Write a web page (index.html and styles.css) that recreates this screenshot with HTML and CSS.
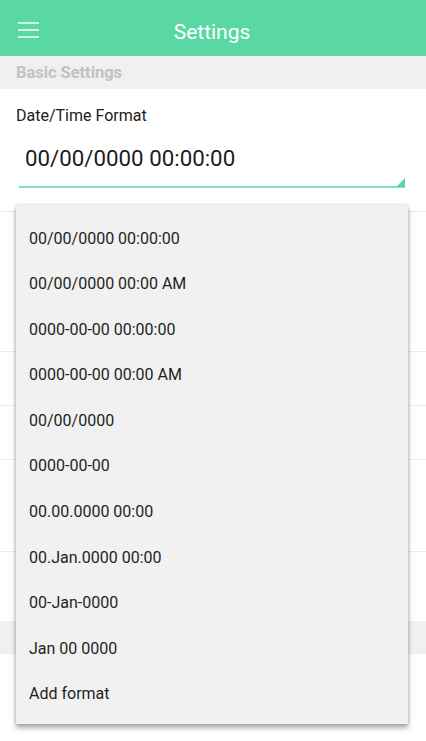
FILE: index.html
```html
<!DOCTYPE html>
<html lang="en">
<head>
<meta charset="utf-8">
<title>Settings</title>
<link rel="stylesheet" href="styles.css">
</head>
<body>
<div class="app">
  <header class="appbar">
    <button class="menu-btn" aria-label="Menu">
      <svg width="21" height="16" viewBox="0 0 21 16" aria-hidden="true">
        <path d="M0 1h21M0 8h21M0 15h21" stroke="#ffffff" stroke-width="1.6" fill="none"/>
      </svg>
    </button>
    <h1 class="title">Settings</h1>
    <span class="spacer"></span>
  </header>

  <main class="content">
    <div class="section-head">Basic Settings</div>

    <div class="row row-format">
      <div class="label">Date/Time Format</div>
      <div class="select">
        <span class="select-value">00/00/0000 00:00:00</span>
        <span class="select-tri"></span>
      </div>
    </div>
    <div class="row row-a"></div>
    <div class="row row-b"></div>
    <div class="row row-c"></div>
    <div class="row row-d"></div>
    <div class="row row-e"></div>
    <div class="section-head section-blank"></div>
    <div class="row row-f"></div>
  </main>

  <ul class="dropdown">
    <li class="opt">00/00/0000 00:00:00</li>
    <li class="opt">00/00/0000 00:00 AM</li>
    <li class="opt">0000-00-00 00:00:00</li>
    <li class="opt">0000-00-00 00:00 AM</li>
    <li class="opt">00/00/0000</li>
    <li class="opt">0000-00-00</li>
    <li class="opt">00.00.0000 00:00</li>
    <li class="opt">00.Jan.0000 00:00</li>
    <li class="opt">00-Jan-0000</li>
    <li class="opt">Jan 00 0000</li>
    <li class="opt">Add format</li>
  </ul>
</div>
</body>
</html>
```

FILE: styles.css
```css
* { box-sizing: border-box; }

html, body {
  margin: 0;
  padding: 0;
  background: #ffffff;
}

body {
  font-family: Roboto, "Liberation Sans", Arial, sans-serif;
  color: #212121;
  width: 426px;
  height: 741px;
  overflow: hidden;
}

.app {
  position: relative;
  width: 426px;
  height: 741px;
  overflow: hidden;
}

.appbar {
  height: 56px;
  background: #5ad8a4;
  display: grid;
  grid-template-columns: 56px 1fr 56px;
  align-items: center;
  padding-top: 4px;
}

.menu-btn {
  border: 0;
  background: none;
  padding: 0 0 0 18px;
  margin: 0;
  display: flex;
  align-items: center;
  height: 16px;
  margin-top: -1px;
}

.title {
  margin: 4px 0 0 0;
  font-size: 21px;
  font-weight: 400;
  color: #ffffff;
  text-align: center;
  line-height: 28px;
  padding-right: 2px;
}

.section-head {
  height: 33px;
  background: #f0f0f0;
  color: #c1c1c6;
  font-weight: 700;
  font-size: 16.4px;
  line-height: 33px;
  padding-left: 16px;
}

.row {
  border-bottom: 1px solid #ebebeb;
  background: #ffffff;
}

.row-format {
  height: 123px;
  padding: 16.5px 21px 0 19px;
}

.label {
  font-size: 16px;
  line-height: 20px;
  margin-left: -3px;
}

.select {
  position: relative;
  margin-top: 17.7px;
  height: 44.5px;
  padding: 0 0 0 6px;
  border-bottom: 2px solid #84e1bb;
}

.select-value {
  display: block;
  font-size: 22.3px;
  line-height: 30px;
  color: #1c1c1c;
}

.select-tri {
  position: absolute;
  right: 0;
  bottom: -1px;
  width: 0;
  height: 0;
  border-left: 9px solid transparent;
  border-bottom: 9px solid #5ad8a4;
}

.row-a { height: 140px; }
.row-b { height: 54px; }
.row-c { height: 54px; }
.row-d { height: 92px; }
.row-e { height: 69px; border-bottom: 0; }
.row-f { height: 90px; border-bottom: 0; }

.dropdown {
  position: absolute;
  top: 205px;
  left: 16px;
  width: 392px;
  margin: 0;
  padding: 10.5px 0 7px 0;
  list-style: none;
  background: #f1f1f1;
  box-shadow: 0 4px 5px rgba(0, 0, 0, 0.32), 0 0 3px rgba(0, 0, 0, 0.18);
}

.opt {
  height: 45.6px;
  line-height: 45.6px;
  padding-left: 13px;
  font-size: 16px;
  color: #1f1f1f;
  white-space: nowrap;
}
```
